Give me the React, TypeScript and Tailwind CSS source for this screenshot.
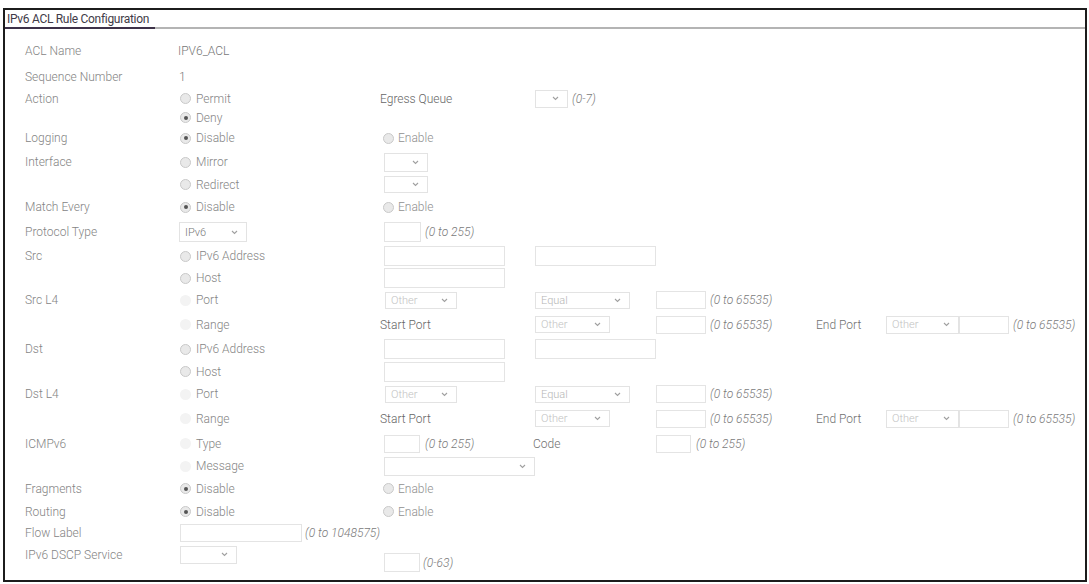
import React from "react";

type RadioProps = { checked?: boolean; disabled?: boolean };

function Radio({ checked, disabled }: RadioProps) {
  if (disabled) {
    return <span className="block w-[11px] h-[11px] rounded-full bg-[#f3f3f3] shrink-0" />;
  }
  return (
    <span className="flex items-center justify-center w-[11px] h-[11px] rounded-full border border-[#c9c9c9] bg-[#e9e9e9] shrink-0">
      {checked && <span className="block w-[4px] h-[4px] rounded-full bg-[#555]" />}
    </span>
  );
}

function Chevron() {
  return (
    <svg width="7" height="5" viewBox="0 0 7 5" className="shrink-0">
      <polyline points="1,1 3.5,3.5 6,1" fill="none" stroke="#a0a0a0" strokeWidth="1.1" />
    </svg>
  );
}

function Select({ w, h = 18, text, color = "#c2c2c2", arrowPad = 8 }: { w: number; h?: number; text?: string; color?: string; arrowPad?: number }) {
  return (
    <div
      className="flex items-center justify-between border border-[#e3e3e3] bg-white pl-[5px] shrink-0 text-[11px]"
      style={{ width: w, height: h, paddingRight: arrowPad }}
    >
      <span style={{ color }}>{text ?? ""}</span>
      <Chevron />
    </div>
  );
}

function Input({ w, h = 19 }: { w: number; h?: number }) {
  return <div className="border border-[#e4e4e4] bg-white shrink-0" style={{ width: w, height: h }} />;
}

function Hint({ children, className = "" }: { children: React.ReactNode; className?: string }) {
  return <span className={"italic font-light text-[#7a7a7a] text-[12px] whitespace-nowrap " + className}>{children}</span>;
}

function Opt({ checked, disabled, label }: { checked?: boolean; disabled?: boolean; label: string }) {
  return (
    <div className="flex items-center gap-[5px] ml-[2px]">
      <Radio checked={checked} disabled={disabled} />
      <span className="text-[#858585]">{label}</span>
    </div>
  );
}

function Enable() {
  return (
    <div className="flex items-center gap-[4px] ml-[3px]">
      <Radio />
      <span className="text-[#909090]">Enable</span>
    </div>
  );
}

type RowProps = {
  h: number;
  label?: string;
  c2?: React.ReactNode;
  c3?: React.ReactNode;
  c4?: React.ReactNode;
  rest?: React.ReactNode;
};

function Row({ h, label, c2, c3, c4, rest }: RowProps) {
  return (
    <div className="flex items-center" style={{ height: h }}>
      <div className="w-[153px] shrink-0 text-[#848484]">{label}</div>
      <div className="w-[202px] shrink-0 flex items-center">{c2}</div>
      <div className="w-[153px] shrink-0 flex items-center">{c3}</div>
      <div className="w-[123px] shrink-0 flex items-center">{c4}</div>
      <div className="flex items-center">{rest}</div>
    </div>
  );
}

function PortRow({ h, label }: { h: number; label: string }) {
  return (
    <Row
      h={h}
      label={label}
      c2={<Opt disabled label="Port" />}
      c3={<div className="ml-[5px]"><Select w={72} h={17} text="Other" /></div>}
      c4={<div className="ml-[2px]"><Select w={95} h={17} text="Equal" color="#b5b5b5" /></div>}
      rest={
        <div className="flex items-center">
          <Input w={50} h={18} />
          <Hint className="ml-[4px]">(0 to 65535)</Hint>
        </div>
      }
    />
  );
}

function RangeRow({ h }: { h: number }) {
  return (
    <Row
      h={h}
      c2={<Opt disabled label="Range" />}
      c3={<span className="text-[#666]">Start Port</span>}
      c4={<div className="ml-[2px]"><Select w={75} h={17} text="Other" /></div>}
      rest={
        <div className="flex items-center">
          <div className="w-[160px] flex items-center shrink-0">
            <Input w={50} h={18} />
            <Hint className="ml-[4px]">(0 to 65535)</Hint>
          </div>
          <span className="w-[70px] shrink-0 text-[#707070]">End Port</span>
          <Select w={73} h={18} text="Other" />
          <Input w={50} h={18} />
          <Hint className="ml-[4px]">(0 to 65535)</Hint>
        </div>
      }
    />
  );
}

function AddrRows({ label, h1, h2 }: { label: string; h1: number; h2: number }) {
  return (
    <>
      <Row
        h={h1}
        label={label}
        c2={<Opt label="IPv6 Address" />}
        c3={<div className="ml-[4px]"><Input w={121} h={20} /></div>}
        c4={<div className="ml-[2px]"><Input w={121} h={20} /></div>}
      />
      <Row h={h2} c2={<Opt label="Host" />} c3={<div className="ml-[4px]"><Input w={121} h={20} /></div>} />
    </>
  );
}

export default function App() {
  return (
    <div className="w-[1089px] h-[584px] bg-white font-[family-name:Roboto,sans-serif] font-light text-[12px] leading-none overflow-hidden">
      <div className="mt-[8px] ml-[3px] w-[1084px] h-[574px] border-2 border-[#1c1c1c] flex flex-col">
        {/* tab header */}
        <div className="flex">
          <div className="w-[150px] shrink-0">
            <div className="h-[17px] flex items-center pl-[2px] text-[#3f3b48] font-normal text-[12px] tracking-[-0.3px] whitespace-nowrap">
              IPv6 ACL Rule Configuration
            </div>
            <div className="h-[2px] bg-[#3d3148]" />
          </div>
          <div className="flex-1 flex flex-col justify-end">
            <div className="h-[2px] bg-[#b4b4b4]" />
          </div>
        </div>

        <div className="pl-[20px] pt-[9px]">
          <Row h={26} label="ACL Name" c2={<span className="text-[#777]">IPV6_ACL</span>} />
          <Row h={25} label="Sequence Number" c2={<span className="text-[#777] ml-[1px]">1</span>} />
          <Row
            h={19}
            label="Action"
            c2={<Opt label="Permit" />}
            c3={<span className="text-[#666]">Egress Queue</span>}
            c4={
              <div className="flex items-center ml-[2px]">
                <Select w={33} h={18} />
                <Hint className="ml-[4px]">(0-7)</Hint>
              </div>
            }
          />
          <Row h={19} c2={<Opt checked label="Deny" />} />
          <Row h={22} label="Logging" c2={<Opt checked label="Disable" />} c3={<Enable />} />
          <Row h={26} label="Interface" c2={<Opt label="Mirror" />} c3={<div className="ml-[4px]"><Select w={44} h={19} /></div>} />
          <Row h={19} c2={<Opt label="Redirect" />} c3={<div className="ml-[4px]"><Select w={44} h={17} /></div>} />
          <Row h={26} label="Match Every" c2={<Opt checked label="Disable" />} c3={<Enable />} />
          <Row
            h={24}
            label="Protocol Type"
            c2={<div className="ml-[1px]"><Select w={68} h={20} text="IPv6" color="#777" /></div>}
            c3={
              <div className="flex items-center ml-[4px]">
                <Input w={37} h={20} />
                <Hint className="ml-[4px]">(0 to 255)</Hint>
              </div>
            }
          />
          <AddrRows label="Src" h1={24} h2={20} />
          <PortRow h={24} label="Src L4" />
          <RangeRow h={25} />
          <AddrRows label="Dst" h1={24} h2={21} />
          <PortRow h={24} label="Dst L4" />
          <RangeRow h={25} />
          <Row
            h={25}
            label="ICMPv6"
            c2={<Opt disabled label="Type" />}
            c3={
              <div className="flex items-center ml-[4px]">
                <Input w={36} h={18} />
                <Hint className="ml-[5px]">(0 to 255)</Hint>
              </div>
            }
            c4={<span className="text-[#707070]">Code</span>}
            rest={
              <div className="flex items-center">
                <Input w={35} h={18} />
                <Hint className="ml-[5px]">(0 to 255)</Hint>
              </div>
            }
          />
          <Row h={20} c2={<Opt disabled label="Message" />} c3={<div className="ml-[4px]"><Select w={151} h={19} /></div>} />
          <Row h={25} label="Fragments" c2={<Opt checked label="Disable" />} c3={<Enable />} />
          <Row h={21} label="Routing" c2={<Opt checked label="Disable" />} c3={<Enable />} />
          <Row
            h={21}
            label="Flow Label"
            c2={
              <div className="flex items-center ml-[2px]">
                <Input w={122} h={18} />
                <Hint className="ml-[3px]">(0 to 1048575)</Hint>
              </div>
            }
          />
          <Row
            h={23}
            label="IPv6 DSCP Service"
            c2={<div className="ml-[2px]"><Select w={57} h={18} /></div>}
            c3={
              <div className="flex items-center ml-[4px] mt-[16px]">
                <Input w={36} h={19} />
                <Hint className="ml-[3px]">(0-63)</Hint>
              </div>
            }
          />
        </div>
      </div>
    </div>
  );
}
